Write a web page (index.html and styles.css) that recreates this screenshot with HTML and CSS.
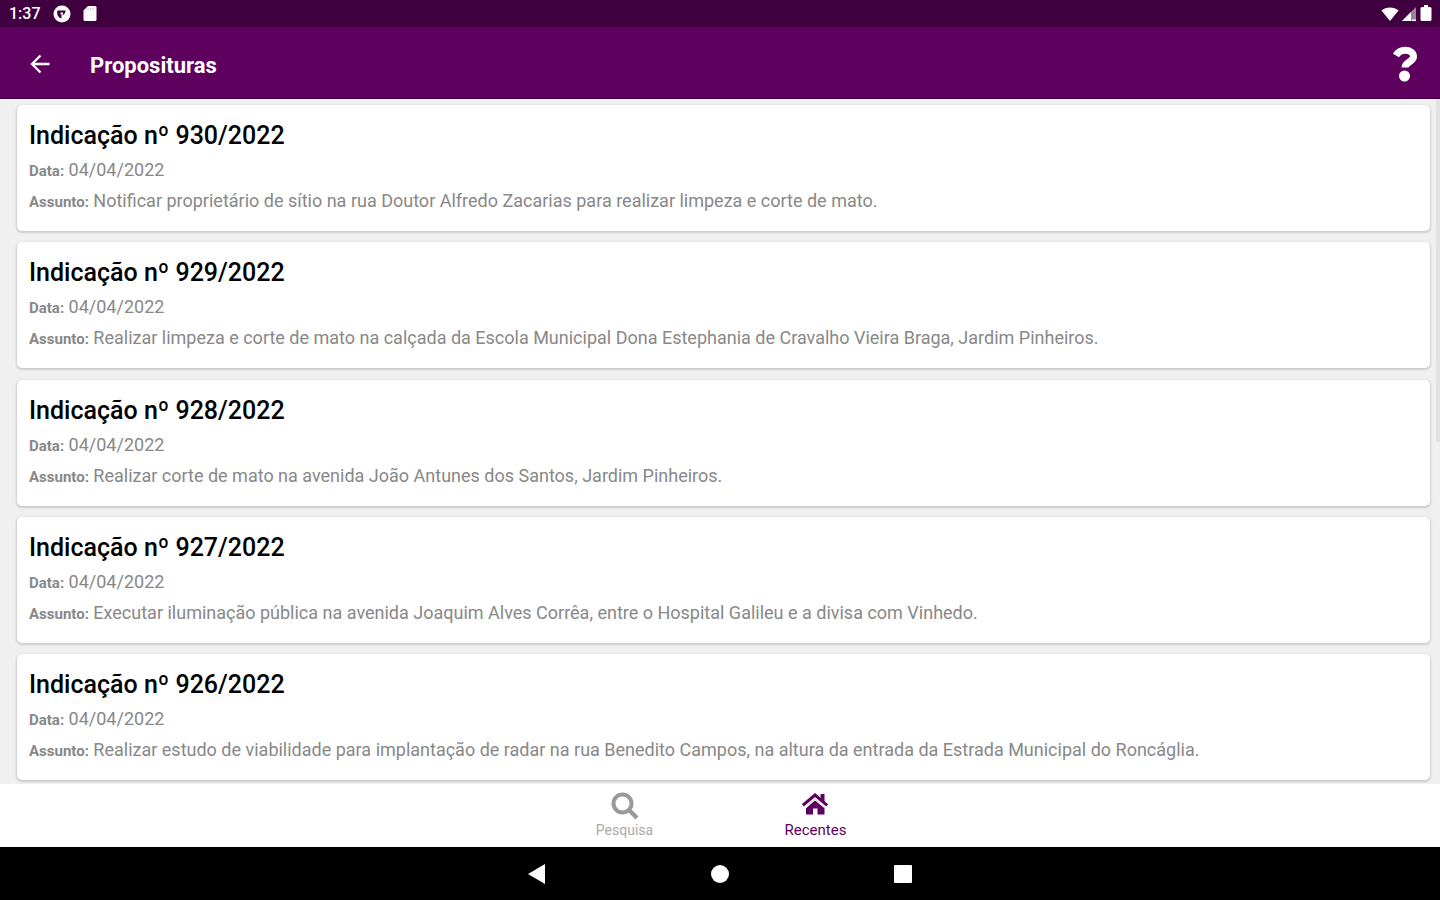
FILE: index.html
```html
<!DOCTYPE html>
<html lang="pt-BR">
<head>
  <meta charset="UTF-8" />
  <meta name="viewport" content="width=device-width, initial-scale=1" />
  <title>Proposituras</title>
  <link rel="stylesheet" href="styles.css">
</head>
<body>
  <div class="status-bar">
    <span class="clock">1:37</span>
    <svg class="status-icon" viewBox="0 0 18 18" aria-hidden="true">
      <circle cx="9" cy="9" r="8.500" fill="#fff"/>
      <path d="M4.500 5.500h8a4 4 0 0 1-4 4.500v3.500A6 6 0 0 1 4.500 5.500z" fill="#400040"/>
      <path d="M7.500 7.500h2.500v2H7.500z" fill="#fff"/>
    </svg>
    <svg class="status-icon sd-icon" viewBox="0 0 14 17" aria-hidden="true">
      <path d="M5 1h7a1.500 1.500 0 0 1 1.500 1.500v12A1.500 1.500 0 0 1 12 16H2a1.500 1.500 0 0 1-1.500-1.500V5.500z" fill="#fff"/>
      <path d="M5 3v2M7.500 3v2M10 3v2" stroke="#cbb8cb" stroke-width="1"/>
    </svg>
    <div class="status-right">
      <svg width="18" height="16" viewBox="0 0 18 16" aria-hidden="true">
        <path d="M0.500 4.500C5 .5 13 .5 17.500 4.500L9 15z" fill="#fff"/>
      </svg>
      <svg width="15" height="16" viewBox="0 0 15 16" aria-hidden="true">
        <path d="M14 1v14H0z" fill="#fff" opacity=".5"/>
        <path d="M9 6v9H0z" fill="#fff"/>
        <path d="M10 14.300h4" stroke="#fff" stroke-width="1.500"/>
      </svg>
      <svg width="12" height="17" viewBox="0 0 12 17" aria-hidden="true">
        <path d="M4 0h4v2h2a1.500 1.500 0 0 1 1.500 1.500v11A1.500 1.500 0 0 1 10 16H2a1.500 1.500 0 0 1-1.500-1.500v-11A1.500 1.500 0 0 1 2 2h2z" fill="#fff"/>
      </svg>
    </div>
  </div>

  <header class="app-bar">
    <button class="icon-button" aria-label="Voltar">
      <svg width="20" height="20" viewBox="0 0 20 20" fill="none" stroke="#fff" stroke-width="2.300">
        <path d="M19.500 10H2.500M10.500 1.500L2 10l8.500 8.500"/>
      </svg>
    </button>
    <h1>Proposituras</h1>
    <button class="icon-button help" aria-label="Ajuda">
      <svg width="26" height="36" viewBox="0 0 26 36">
        <path d="M4 9.500C6 6 9 4.200 13 4.200c5 0 8.500 2.600 8.500 6.300 0 5.500-8.500 5.500-8.500 11" fill="none" stroke="#fff" stroke-width="7"/>
        <circle cx="12.500" cy="30" r="5.500" fill="#fff"/>
      </svg>
    </button>
  </header>

  <main class="list">
    <article class="card">
      <h2>Indicação nº 930/2022</h2>
      <p><b>Data:</b> 04/04/2022</p>
      <p><b>Assunto:</b> Notificar proprietário de sítio na rua Doutor Alfredo Zacarias para realizar limpeza e corte de mato.</p>
    </article>
    <article class="card">
      <h2>Indicação nº 929/2022</h2>
      <p><b>Data:</b> 04/04/2022</p>
      <p><b>Assunto:</b> Realizar limpeza e corte de mato na calçada da Escola Municipal Dona Estephania de Cravalho Vieira Braga, Jardim Pinheiros.</p>
    </article>
    <article class="card">
      <h2>Indicação nº 928/2022</h2>
      <p><b>Data:</b> 04/04/2022</p>
      <p><b>Assunto:</b> Realizar corte de mato na avenida João Antunes dos Santos, Jardim Pinheiros.</p>
    </article>
    <article class="card">
      <h2>Indicação nº 927/2022</h2>
      <p><b>Data:</b> 04/04/2022</p>
      <p><b>Assunto:</b> Executar iluminação pública na avenida Joaquim Alves Corrêa, entre o Hospital Galileu e a divisa com Vinhedo.</p>
    </article>
    <article class="card">
      <h2>Indicação nº 926/2022</h2>
      <p><b>Data:</b> 04/04/2022</p>
      <p><b>Assunto:</b> Realizar estudo de viabilidade para implantação de radar na rua Benedito Campos, na altura da entrada da Estrada Municipal do Roncáglia.</p>
    </article>
    <div class="scrollbar"></div>
  </main>

  <nav class="tabs" aria-label="Principal">
    <a href="#pesquisa" class="tab">
      <svg width="28" height="28" viewBox="0 0 28 28" fill="none" stroke="#999" aria-hidden="true">
        <circle cx="11.500" cy="11.500" r="9" stroke-width="4"/>
        <path d="M18 18l8 8" stroke-width="4.500"/>
      </svg>
      <span>Pesquisa</span>
    </a>
    <a href="#recentes" class="tab active" aria-current="page">
      <svg width="28" height="28" viewBox="0 0 28 28" aria-hidden="true">
        <path d="M13 7.500l9.500 8V22.500h-7V16.500h-4.500v6H4V15.500zM18.500 2h4v8l-4-3.500z" fill="#5e005e"/>
        <path d="M4 15.800L13 8l9.500 7.800" fill="none" stroke="#fff" stroke-width="1"/>
        <path d="M.8 13.300L13 3l12.200 10.300" fill="none" stroke="#5e005e" stroke-width="3"/>
      </svg>
      <span>Recentes</span>
    </a>
  </nav>

  <div class="system-nav">
    <button aria-label="Voltar">
      <svg width="20" height="20" viewBox="0 0 20 20"><path d="M1 10L18 0v20z" fill="#fff"/></svg>
    </button>
    <button aria-label="Início">
      <svg width="20" height="20" viewBox="0 0 20 20"><circle cx="10" cy="10" r="9" fill="#fff"/></svg>
    </button>
    <button aria-label="Aplicativos recentes">
      <svg width="20" height="20" viewBox="0 0 20 20"><rect x="1" y="1" width="18" height="18" rx="1" fill="#fff"/></svg>
    </button>
  </div>
</body>
</html>
```

FILE: styles.css
```css
*, *::before, *::after {
  box-sizing: border-box;
}
body {
  margin: 0;
  min-height: 100vh;
  display: flex;
  flex-direction: column;
  font-family: Roboto, sans-serif;
  background: #f0f0f0;
}
h1, h2, p {
  margin: 0;
}
button {
  border: 0;
  padding: 0;
  background: none;
  cursor: pointer;
}
svg {
  display: block;
}

/* Status bar */
.status-bar {
  display: flex;
  align-items: center;
  height: 27px;
  padding: 0 8px 0 9px;
  background: #400040;
  color: #fff;
}
.clock {
  font-size: 16px;
  font-weight: 500;
}
.status-icon {
  width: 18px;
  height: 18px;
  margin-left: 12px;
}
.sd-icon {
  width: 14px;
  height: 17px;
}
.status-right {
  display: flex;
  align-items: center;
  gap: 3px;
  margin-left: auto;
}

/* App bar */
.app-bar {
  display: flex;
  align-items: center;
  height: 72px;
  padding: 3px 22px 0 30px;
  background: #5e005e;
  border-bottom: 1px solid #400040;
  color: #fff;
}
.app-bar h1 {
  margin-left: 40px;
  padding-top: 3px;
  font-size: 22px;
  font-weight: 700;
  line-height: 28px;
}
.help {
  margin-left: auto;
}

/* List */
.list {
  position: relative;
  flex: 1;
  display: flex;
  flex-direction: column;
  justify-content: space-between;
  gap: 10px;
  padding: 6px 10px 4px 17px;
}
.card {
  padding: 15px 12px 18px;
  background: #fff;
  border-radius: 5px;
  box-shadow: 0 1px 2px 1px #ccc;
}
.card h2 {
  font-size: 25px;
  font-weight: 500;
  line-height: 32px;
  color: #000;
}
.card p {
  margin-top: 7px;
  font-size: 18px;
  line-height: 24px;
  color: #888;
}
.card h2 + p {
  margin-top: 6px;
}
.card b {
  font-size: 15px;
  font-weight: 700;
  line-height: 1;
}
.scrollbar {
  position: absolute;
  top: 0;
  right: 0;
  width: 4px;
  height: 50%;
  background: #e2e2e2;
}

/* Bottom tabs */
.tabs {
  display: flex;
  justify-content: center;
  height: 63px;
  background: #fff;
}
.tab {
  display: flex;
  flex-direction: column;
  align-items: center;
  width: 191px;
  padding-top: 8px;
  color: #aaa;
  font-size: 14px;
  line-height: 20px;
  text-decoration: none;
}
.active {
  color: #5e005e;
  font-size: 15px;
}

/* System navigation */
.system-nav {
  display: flex;
  justify-content: center;
  align-items: center;
  gap: 163px;
  height: 53px;
  background: #000;
}
```
